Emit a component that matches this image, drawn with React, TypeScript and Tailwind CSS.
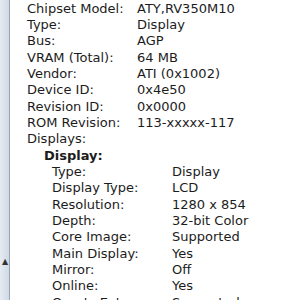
import React from 'react'

type Row = [string, string]

const top: Row[] = [
  ['Chipset Model:', 'ATY,RV350M10'],
  ['Type:', 'Display'],
  ['Bus:', 'AGP'],
  ['VRAM (Total):', '64 MB'],
  ['Vendor:', 'ATI (0x1002)'],
  ['Device ID:', '0x4e50'],
  ['Revision ID:', '0x0000'],
  ['ROM Revision:', '113-xxxxx-117'],
]

const display: Row[] = [
  ['Type:', 'Display'],
  ['Display Type:', 'LCD'],
  ['Resolution:', '1280 x 854'],
  ['Depth:', '32-bit Color'],
  ['Core Image:', 'Supported'],
  ['Main Display:', 'Yes'],
  ['Mirror:', 'Off'],
  ['Online:', 'Yes'],
  ['Quartz Extreme:', 'Supported'],
]

export default function App() {
  return (
    <div
      className="flex w-[300px] h-[300px] overflow-hidden bg-white text-[#1c1c1c] text-[13px] leading-[16.35px]"
      style={{ fontFamily: '"DejaVu Sans", sans-serif' }}
    >
      {/* side pane edge */}
      <div className="relative w-[10px] shrink-0 bg-gradient-to-r from-[#e6ebf2] to-[#cfd9e6] border-r border-[#9aa6b4]">
        <span className="absolute left-[2px] top-[254px] text-[8px] text-[#333]">▲</span>
      </div>

      <div className="flex-1 pt-[0.5px]">
        <div className="grid grid-cols-[110px_1fr] pl-[17px]">
          {top.map(([k, v]) => (
            <React.Fragment key={k}>
              <div className="whitespace-nowrap">{k}</div>
              <div className="whitespace-nowrap">{v}</div>
            </React.Fragment>
          ))}
        </div>
        <div className="pl-[17px]">Displays:</div>
        <div className="pl-[34px] font-bold">Display:</div>
        <div className="grid grid-cols-[120px_1fr] pl-[42px]">
          {display.map(([k, v]) => (
            <React.Fragment key={k}>
              <div className="whitespace-nowrap">{k}</div>
              <div className="whitespace-nowrap">{v}</div>
            </React.Fragment>
          ))}
        </div>
      </div>
    </div>
  )
}
